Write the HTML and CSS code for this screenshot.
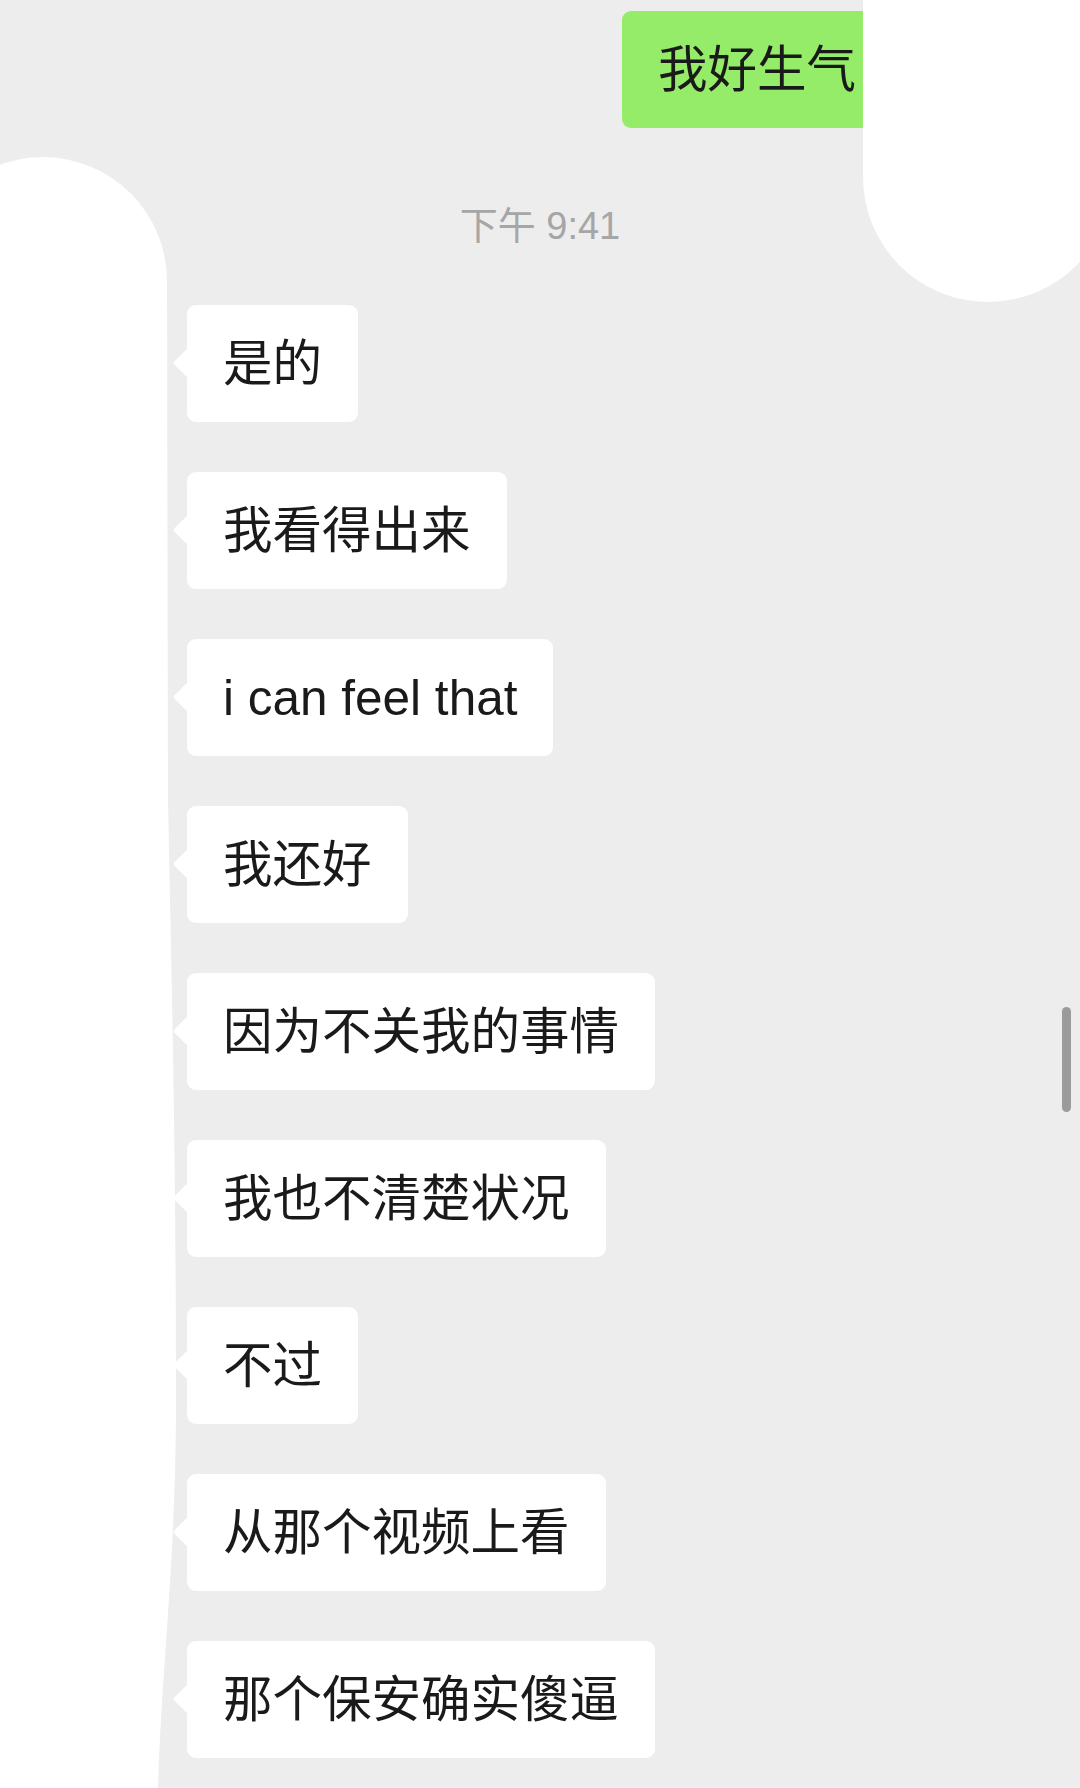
FILE: index.html
```html
<!DOCTYPE html>
<html lang="zh-CN">
<head>
    <meta charset="UTF-8">
    <meta name="viewport" content="width=device-width, initial-scale=1.0">
    <title>聊天</title>
    <link rel="stylesheet" href="styles.css">
</head>
<body>
    <div class="chat">
        <div class="row me">
            <div class="bubble green">我好生气</div>
        </div>

        <div class="time">下午 9:41</div>

        <div class="row other"><div class="bubble">是的</div></div>
        <div class="row other"><div class="bubble">我看得出来</div></div>
        <div class="row other"><div class="bubble">i can feel that</div></div>
        <div class="row other"><div class="bubble">我还好</div></div>
        <div class="row other"><div class="bubble">因为不关我的事情</div></div>
        <div class="row other"><div class="bubble">我也不清楚状况</div></div>
        <div class="row other"><div class="bubble">不过</div></div>
        <div class="row other"><div class="bubble">从那个视频上看</div></div>
        <div class="row other"><div class="bubble">那个保安确实傻逼</div></div>
    </div>

    <!-- weiße übermalung (avatare verdeckt) -->
    <svg class="mask-left" width="200" height="1788" viewBox="0 0 200 1788">
        <path d="M -81 281 A 124 124 0 0 1 167 281 L 168 800 C 172 1000 176 1150 176 1400 C 176 1560 162 1660 158 1788 L -81 1788 Z" fill="#fff"/>
    </svg>
    <div class="mask-right"></div>

    <div class="scrollbar"></div>
</body>
</html>
```

FILE: styles.css
```css
html, body {
    margin: 0;
    padding: 0;
}
body {
    width: 1080px;
    height: 1788px;
    overflow: hidden;
    position: relative;
    background-color: #ededed;
    font-family: "Liberation Sans", "Noto Sans CJK SC", sans-serif;
    color: #1a1a1a;
}
.chat {
    display: flex;
    flex-direction: column;
    padding-top: 11px;
}
.row {
    display: flex;
    margin-bottom: 50px;
}
.row.me {
    justify-content: flex-end;
    padding-right: 188px;
    margin-bottom: 73px;
}
.row.other {
    padding-left: 187px;
}
.bubble {
    position: relative;
    padding: 29px 36px;
    font-size: 49.5px;
    line-height: 59px;
    height: 59px;
    white-space: nowrap;
    background-color: #fff;
    border-radius: 9px;
}
.bubble::before {
    content: "";
    position: absolute;
    left: -10px;
    top: 48px;
    width: 20px;
    height: 20px;
    background-color: #fff;
    border-radius: 2px;
    transform: rotate(45deg);
}
.bubble.green {
    background-color: #95ec69;
}
.bubble.green::before {
    left: auto;
    right: -10px;
    background-color: #95ec69;
}
.time {
    text-align: center;
    font-size: 38px;
    line-height: 50px;
    color: #a6a6a6;
    margin-bottom: 54px;
}
.mask-left {
    position: absolute;
    left: 0;
    top: 0;
}
.mask-right {
    position: absolute;
    left: 863px;
    top: 0;
    width: 250px;
    height: 302px;
    background-color: #fff;
    border-bottom-left-radius: 125px;
    border-bottom-right-radius: 125px;
}
.scrollbar {
    position: absolute;
    left: 1062px;
    top: 1007px;
    width: 9px;
    height: 105px;
    border-radius: 5px;
    background-color: #9b9b9b;
}
```
